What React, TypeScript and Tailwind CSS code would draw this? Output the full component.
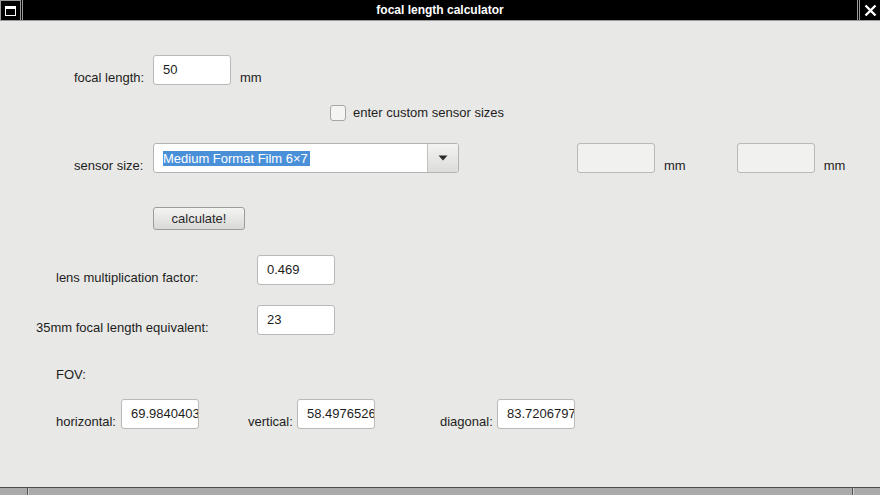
const font = "font-['Liberation_Sans',Arial,sans-serif]";

function Field({ value, disabled }: { value?: string; disabled?: boolean }) {
  return (
    <div
      className={`w-[78px] h-[30px] shrink-0 rounded-[3px] border border-[#b9b9b7] pl-[9px] pr-[2px] flex items-center overflow-hidden whitespace-nowrap text-[13px] text-[#1d1d1d] ${
        disabled ? "bg-[#f1f1f0]" : "bg-white"
      }`}
    >
      {value}
    </div>
  );
}

function Label({ text, className = "" }: { text: string; className?: string }) {
  return <span className={`text-[13px] leading-[14px] text-[#1d1d1d] whitespace-nowrap ${className}`}>{text}</span>;
}

export default function App() {
  return (
    <div className={`w-[880px] h-[495px] overflow-hidden flex flex-col bg-[#e8e8e6] ${font}`}>
      {/* title bar */}
      <div className="h-[21px] shrink-0 flex bg-black border-b border-[#9a9a9a]">
        <div className="w-[21px] h-full border border-b-0 border-[#9a9a9a] flex items-center justify-center">
          <div className="w-[11px] h-[10px] border border-white border-t-[3px]" />
        </div>
        <div className="w-[1px]" />
        <div className="flex-1 border-l border-r border-[#9a9a9a] flex items-center justify-center text-white text-[12px] font-bold">
          focal length calculator
        </div>
        <div className="w-[1px]" />
        <div className="w-[21px] h-full border-l border-[#9a9a9a] flex items-center justify-center">
          <svg width="13" height="13" viewBox="0 0 13 13">
            <path d="M1.5 1.5 L11.5 11.5 M11.5 1.5 L1.5 11.5" stroke="white" strokeWidth="2.4" />
          </svg>
        </div>
      </div>

      {/* content */}
      <div className="flex-1 flex flex-col">
        <div className="mt-[34px] flex items-end pl-[74px]">
          <Label text="focal length:" className="w-[79px]" />
          <Field value="50" />
          <Label text="mm" className="ml-[9px]" />
        </div>

        <div className="mt-[20px] h-[16px] flex items-center pl-[330px]">
          <div className="w-[16px] h-[16px] rounded-[3px] border border-[#a6a6a4] bg-[#f4f4f3]" />
          <Label text="enter custom sensor sizes" className="ml-[7px]" />
        </div>

        <div className="mt-[22px] flex items-end pl-[74px]">
          <Label text="sensor size:" className="w-[79px]" />
          <div className="w-[306px] h-[30px] flex rounded-[3px] border border-[#b3b3b1] bg-white overflow-hidden">
            <div className="flex-1 flex items-center pl-[9px]">
              <span className="bg-[#4a90d9] text-white text-[13px] leading-[15px] pr-[2px]">Medium Format Film 6×7</span>
            </div>
            <div className="w-[31px] border-l border-[#c2c2c0] bg-gradient-to-b from-[#f3f3f2] to-[#dcdcda] flex items-center justify-center">
              <svg width="10" height="6" viewBox="0 0 10 6">
                <path d="M0.5 0.5 H9.5 L5 5.5 Z" fill="#2a2a2a" />
              </svg>
            </div>
          </div>
          <div className="ml-[118px]">
            <Field disabled />
          </div>
          <Label text="mm" className="ml-[9px]" />
          <div className="ml-[51px]">
            <Field disabled />
          </div>
          <Label text="mm" className="ml-[9px]" />
        </div>

        <div className="mt-[34px] pl-[153px]">
          <div className="w-[92px] h-[23px] rounded-[3px] border border-[#9c9c9a] bg-gradient-to-b from-[#f4f4f3] to-[#d9d9d7] flex items-center justify-center text-[13px] text-[#2a2a2a]">
            calculate!
          </div>
        </div>

        <div className="mt-[25px] flex items-end pl-[56px]">
          <Label text="lens multiplication factor:" className="w-[201px]" />
          <Field value="0.469" />
        </div>

        <div className="mt-[20px] flex items-end pl-[36px]">
          <Label text="35mm focal length equivalent:" className="w-[221px]" />
          <Field value="23" />
        </div>

        <div className="mt-[32px] pl-[56px] h-[15px] flex items-center">
          <Label text="FOV:" />
        </div>

        <div className="mt-[17px] flex items-end pl-[56px]">
          <Label text="horizontal:" className="w-[65px]" />
          <Field value="69.98404032" />
          <Label text="vertical:" className="ml-[49px] w-[49px]" />
          <Field value="58.49765264" />
          <Label text="diagonal:" className="ml-[65px] w-[57px]" />
          <Field value="83.72067971" />
        </div>
      </div>

      {/* bottom frame */}
      <div className="h-[8px] shrink-0 border-t border-[#4d4d4d] bg-[#aaaaaa] flex">
        <div className="w-[28px] border-r border-[#555]" />
        <div className="flex-1 border-l border-[#cfcfcf] border-r border-r-[#555]" />
        <div className="w-[27px] border-l border-[#cfcfcf]" />
      </div>
    </div>
  );
}
